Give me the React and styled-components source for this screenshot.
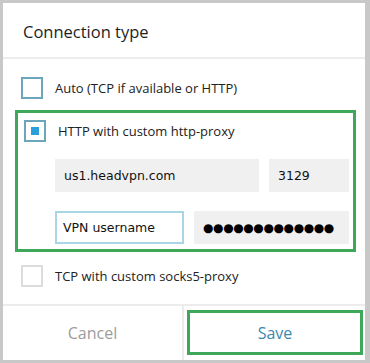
import styled, { createGlobalStyle } from 'styled-components';

const Global = createGlobalStyle`
  html, body {
    margin: 0;
    background: #c8c8c8;
  }
  body {
    font-family: "Open Sans", "Noto Sans", sans-serif;
    color: #222;
  }
`;

const Panel = styled.div`
  margin: 3px 0 0 3px;
  width: 362px;
  height: 357px;
  background: #fff;
  display: flex;
  flex-direction: column;
`;

const Header = styled.div`
  height: 56px;
  border-bottom: 2px solid #ececec;
  display: flex;
  align-items: center;
  padding: 3px 20px 0;
  box-sizing: border-box;
  font-size: 16.5px;
  color: #1e1e1e;
`;

const Body = styled.div`
  padding: 18px 9px 0 12px;
  display: flex;
  flex-direction: column;
  flex: 1;
`;

const Row = styled.div`
  display: flex;
  align-items: center;
  gap: 12px;
  padding-left: ${(p) => p.$inset || 6}px;
  height: 22px;
  font-size: 13px;
  color: #222;
`;

const Box = styled.span`
  width: 22px;
  height: 22px;
  box-sizing: border-box;
  border: 2px solid ${(p) => (p.$dim ? '#dcdcdc' : '#6ba6ba')};
  display: flex;
  align-items: center;
  justify-content: center;
  flex: none;
  &::after {
    content: '';
    display: ${(p) => (p.$checked ? 'block' : 'none')};
    width: 8px;
    height: 8px;
    background: #2b9fdc;
  }
`;

const Group = styled.div`
  margin-top: 11px;
  border: 3px solid #3ea75a;
  padding: 7px 4px 5px 3px;
`;

const Fields = styled.div`
  margin: 17px 0 0 34px;
  display: grid;
  grid-template-columns: ${(p) => p.$cols};
  column-gap: 10px;
  & + & {
    margin-top: 19px;
  }
`;

const Field = styled.div`
  height: 33px;
  box-sizing: border-box;
  background: ${(p) => (p.$focus ? '#fff' : '#f0f0f0')};
  border: 2px solid ${(p) => (p.$focus ? '#a9d5e5' : 'transparent')};
  display: flex;
  align-items: center;
  padding-left: ${(p) => (p.$focus ? 6 : 7)}px;
  font-family: "DejaVu Sans", Verdana, sans-serif;
  font-size: 12.5px;
  color: #111;
  white-space: nowrap;
  overflow: hidden;
`;

const Dots = styled.span`
  font-size: 12px;
  letter-spacing: -0.4px;
  color: #000;
`;

const LastRow = styled(Row)`
  margin-top: 13px;
`;

const Footer = styled.div`
  height: 56px;
  box-sizing: border-box;
  border-top: 2px solid #ececec;
  display: grid;
  grid-template-columns: 181px 1fr;
`;

const Button = styled.button`
  all: unset;
  box-sizing: border-box;
  display: flex;
  align-items: center;
  justify-content: center;
  font-family: "Open Sans", "Noto Sans", sans-serif;
  font-size: 16px;
  color: ${(p) => (p.$primary ? '#3b88ab' : '#9c9c9c')};
  border-right: ${(p) => (p.$primary ? 'none' : '2px solid #ececec')};
  ${(p) =>
    p.$primary &&
    `
    margin: 4px 2px 5px 3px;
    border: 3px solid #3ea75a;
  `}
`;

export default function App() {
  return (
    <>
      <Global />
      <Panel>
        <Header>Connection type</Header>
        <Body>
          <Row>
            <Box />
            Auto (TCP if available or HTTP)
          </Row>
          <Group>
            <Row $inset={3}>
              <Box $checked />
              HTTP with custom http-proxy
            </Row>
            <Fields $cols="204px 80px">
              <Field>us1.headvpn.com</Field>
              <Field>3129</Field>
            </Fields>
            <Fields $cols="129px 155px">
              <Field $focus>VPN username</Field>
              <Field>
                <Dots>●●●●●●●●●●●●●</Dots>
              </Field>
            </Fields>
          </Group>
          <LastRow>
            <Box $dim />
            TCP with custom socks5-proxy
          </LastRow>
        </Body>
        <Footer>
          <Button>Cancel</Button>
          <Button $primary>Save</Button>
        </Footer>
      </Panel>
    </>
  );
}
